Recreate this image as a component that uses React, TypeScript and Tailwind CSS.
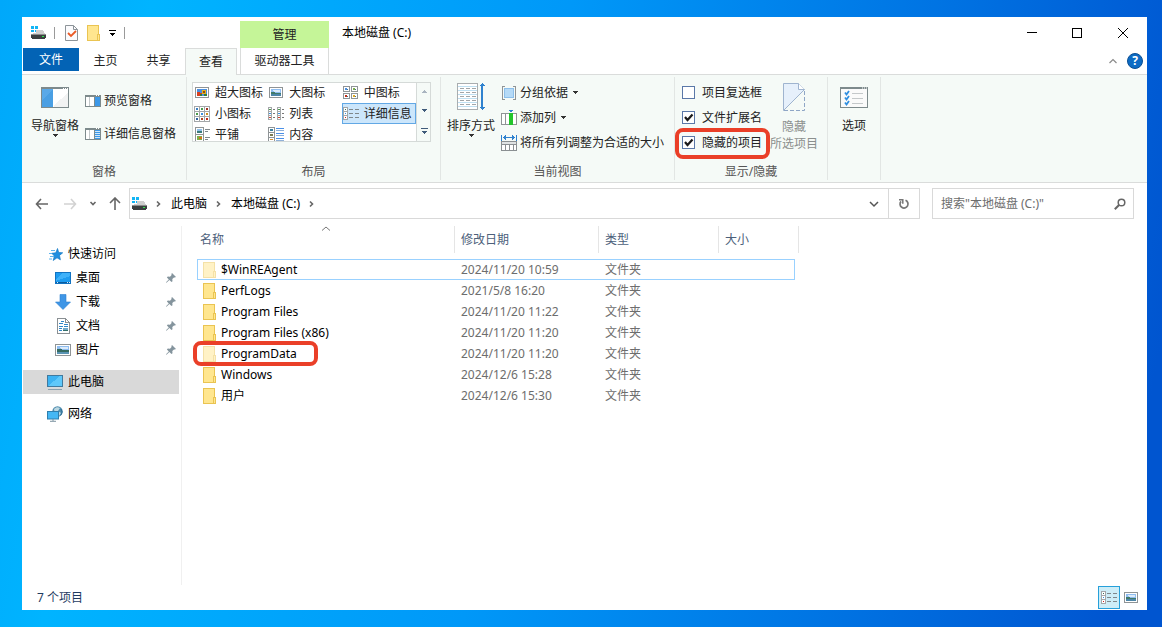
import React, { useState } from 'react';

type Kids = { children?: React.ReactNode };
type SvgProps = { w: number; h: number; children: React.ReactNode; smooth?: boolean; className?: string };

const Svg = ({ w, h, children, smooth, className = '' }: SvgProps) => (
  <svg
    width={w}
    height={h}
    viewBox={`0 0 ${w} ${h}`}
    fill="none"
    aria-hidden="true"
    shapeRendering={smooth ? 'auto' : 'crispEdges'}
    className={`shrink-0 ${className}`}
  >
    {children}
  </svg>
);

// ---------- Icons ----------

const DriveIcon = () => (
  <Svg w={16} h={16}>
    <path d="M1 1h3v3h-3zM5 1h3v3h-3zM1 5h3v2h-3zM5 5h3v2h-3z" fill="#12b5f5" />
    <path d="M6 5h7l3 5H2l1-2h3z" fill="#cfcfcf" />
    <rect x="1" y="9" width="15" height="4" fill="#3b3f40" />
    <rect x="2" y="13" width="13" height="1" fill="#3b3f40" />
    <rect x="1" y="9" width="15" height="1" fill="#8c8c8c" />
    <rect x="12" y="11" width="2" height="1" fill="#2eea4a" />
  </Svg>
);

const FolderIcon = ({ faded = false }: { faded?: boolean }) => (
  <Svg w={14} h={16} className={faded ? 'opacity-50' : ''}>
    <rect x="0.5" y="0.5" width="11" height="15" fill="#ffe68f" stroke="#eac452" />
    <path d="M10.500 9.500h2v6h-2z" fill="#ffe790" stroke="#eac452" />
  </Svg>
);

const PropertiesIcon = () => (
  <Svg w={13} h={16} smooth>
    <path d="M.5.5h8l4 4v11H.5z" fill="#fbfbfd" stroke="#8d9499" />
    <path d="M8.5.5v4h4" stroke="#8d9499" />
    <path d="M3 8l3 3 5-5" stroke="#ea5a26" strokeWidth="1.8" />
  </Svg>
);

const Arrow = ({ color = '#333' }: { color?: string }) => (
  <Svg w={5} h={3}>
    <path d="M0 0h5v1H0zM1 1h3v1H1zM2 2h1v1H2z" fill={color} />
  </Svg>
);

const UpArrow = ({ color }: { color: string }) => (
  <Svg w={5} h={3}>
    <path d="M2 0h1v1H2zM1 1h3v1H1zM0 2h5v1H0z" fill={color} />
  </Svg>
);

const NavPaneIcon = () => (
  <Svg w={28} h={21}>
    <rect x="0.5" y="0.5" width="27" height="20" fill="#fff" stroke="#7d8a8c" />
    <path d="M13 20V18L27 6v14z" fill="#f2f3f3" />
    <rect x="0" y="0" width="28" height="2" fill="#7d8a8c" />
    <path d="M22 1h1M24 1h1M26 1h1" stroke="#fff" />
    <rect x="1" y="2" width="11" height="18" fill="#4a9fe3" />
    <path d="M1 13V2h11z" fill="#5aa9e8" />
  </Svg>
);

const PreviewPaneIcon = ({ lines = false }: { lines?: boolean }) => (
  <Svg w={16} h={12}>
    <rect x="0.5" y="0.5" width="15" height="11" fill="#fff" stroke="#7d8a8c" />
    <rect width="16" height="2" fill="#7d8a8c" />
    <path d="M4.500 2v9" stroke="#c3c8ca" />
    <path d="M9.500 1v10" stroke="#7d8a8c" />
    <rect x="10" y="2" width="5" height="9" fill="#3d98e8" />
    {lines && <path d="M10 3.500h5M10 5.500h5M10 7.500h5M10 9.500h5" stroke="#cfe6fa" />}
    <path d="M11 .5h1M13 .5h1" stroke="#fff" />
  </Svg>
);

const PictureIcon = ({ vivid = false }: { vivid?: boolean }) => (
  <Svg w={14} h={11}>
    <rect x="0.5" y="0.5" width="13" height="10" fill="#fff" stroke="#8f9496" />
    {vivid ? (
      <>
        <rect x="2" y="2" width="10" height="7" fill="#4b8fe0" />
        <path d="M2 5h3v1h2v3H2z" fill="#d8401f" />
        <path d="M7 3h4v4H7z" fill="#e8b21f" />
        <path d="M8 4h2v2H8z" fill="#8a4a18" />
        <path d="M5 7h2v2H5zM9 7h3v2H9z" fill="#3a7a34" />
      </>
    ) : (
      <>
        <rect x="2" y="2" width="10" height="7" fill="#8fbdf0" />
        <path d="M4 3h7v2H5z" fill="#dcebf9" />
        <path d="M2 5h3l2 1h5v1H2z" fill="#417a68" />
        <path d="M2 7h10v2H2z" fill="#4d86a8" />
      </>
    )}
  </Svg>
);

// Wider variant used by the navigation pane
const PicturesFolderIcon = () => (
  <Svg w={16} h={12}>
    <rect x="0.5" y="0.5" width="15" height="11" fill="#fff" stroke="#8f9496" />
    <rect x="2" y="2" width="12" height="8" fill="#8fbdf0" />
    <path d="M4 3h9v2H6z" fill="#dcebf9" />
    <path d="M2 5h3l3 1h6v2H2z" fill="#356b62" />
    <path d="M2 8h12v2H2z" fill="#5a94b4" />
  </Svg>
);

const cells = ['#3a7fc0', '#4a9a4a', '#a03020', '#4a9a4a', '#3a8fe0', '#d09020', '#2f5f9f', '#b04020', '#c02818'];

const SmallIconsIcon = () => (
  <Svg w={16} h={16}>
    {cells.map((color, i) => {
      const x = (i % 3) * 5;
      const y = Math.floor(i / 3) * 5;
      return (
        <g key={i}>
          <rect x={x + 0.5} y={y + 0.5} width="5" height="5" fill="#fff" stroke="#a3a7a9" />
          <rect x={x + 2} y={y + 2} width="2" height="2" fill={color} />
        </g>
      );
    })}
  </Svg>
);

const MediumIconsIcon = () => (
  <Svg w={15} h={13}>
    {['#4b8fe0', '#7cae4a', '#c03018', '#e0a820'].map((color, i) => {
      const x = (i % 2) * 8;
      const y = Math.floor(i / 2) * 7;
      return (
        <g key={i}>
          <rect x={x + 0.5} y={y + 0.5} width="6" height="5" fill="#fff" stroke="#8f9496" />
          <rect x={x + 2} y={y + 2} width="2" height="2" fill={color} />
          <rect x={x + 4} y={y + 3} width="1" height="1" fill="#3f6f8f" />
        </g>
      );
    })}
  </Svg>
);

const ListIcon = () => (
  <Svg w={16} h={13}>
    {[0, 9].map((x) => (
      <g key={x}>
        <path d={`M${x} .5h4M${x} 4.500h4M${x} 8.500h4M${x} 12.500h4M${x + 0.5} 0v13M${x + 3.5} 0v13`} stroke="#a3a7a9" />
        <path d={`M${x + 5} 2.500h2M${x + 5} 6.500h2M${x + 5} 10.500h2`} stroke="#777" />
        <path d={`M${x + 1} 2.500h2`} stroke="#4a9a4a" />
        <path d={`M${x + 1} 6.500h2`} stroke="#3a8fe0" />
        <path d={`M${x + 1} 10.500h2`} stroke="#d04030" />
      </g>
    ))}
  </Svg>
);

const DetailsIcon = () => (
  <Svg w={16} h={13}>
    <rect x="0.5" y="0.5" width="4" height="12" fill="#fff" stroke="#a3a7a9" />
    <path d="M0 4.500h5M0 8.500h5" stroke="#a3a7a9" />
    <path d="M2 2.500h1" stroke="#3a6f5a" />
    <path d="M2 6.500h1" stroke="#3a8fe0" />
    <path d="M2 10.500h1" stroke="#d02020" />
    <path d="M6 2.500h4M12 2.500h4M6 6.500h4M12 6.500h4M6 10.500h4M12 10.500h4" stroke="#7f878b" />
  </Svg>
);

const TilesIcon = () => (
  <Svg w={15} h={15}>
    <rect x="0.500" y="0.500" width="8" height="14" fill="#fff" stroke="#8f9496" />
    <path d="M0 7.500h9" stroke="#8f9496" />
    <rect x="2" y="2" width="5" height="4" fill="#8fc0ea" />
    <rect x="2" y="4" width="5" height="2" fill="#3a7a7a" />
    <rect x="2" y="9" width="5" height="4" fill="#7cae4a" />
    <rect x="4" y="10" width="3" height="2" fill="#d8701f" />
    <path d="M10 2.500h5M10 4.500h3M10 10.500h5M10 12.500h3" stroke="#7f878b" />
  </Svg>
);

const ContentIcon = () => (
  <Svg w={16} h={15}>
    <rect x="0.500" y="0.500" width="6" height="14" fill="#fff" stroke="#8f9496" />
    <path d="M0 5.500h7M0 10.500h7" stroke="#8f9496" />
    <path d="M2 3h3" stroke="#3a7f9f" strokeWidth="2" />
    <path d="M2 8h3" stroke="#7a7a50" strokeWidth="2" />
    <path d="M2 12.500h3" stroke="#d8902f" />
    <path d="M8 1.500h8M8 6.500h8M8 11.500h8" stroke="#4a90e8" />
    <path d="M8 3.500h8M8 8.500h8M8 13.500h8" stroke="#8fb0d8" />
  </Svg>
);

const SortIcon = () => (
  <Svg w={28} h={28}>
    <rect x="0.500" y="0.500" width="20" height="26" fill="#fff" stroke="#a9adaf" />
    <path d="M1 3.500h19M1 7.500h19M1 11.500h19M1 15.500h19M1 19.500h19M1 23.500h19" stroke="#bfe0f2" />
    <path
      d="M3 5.500h4M9 5.500h4M15 5.500h4M3 9.500h4M9 9.500h4M15 9.500h4M3 13.500h4M9 13.500h4M15 13.500h4M3 17.500h4M9 17.500h4M15 17.500h4M3 21.500h4M9 21.500h4M15 21.500h4"
      stroke="#a2a6a8"
    />
    <path d="M25 3v21" stroke="#2f82cf" strokeWidth="2" />
    <path d="M22 3l3-3 3 3zM22 24l3 3 3-3z" fill="#2f82cf" />
  </Svg>
);

const GroupByIcon = () => (
  <Svg w={16} h={14}>
    <path d="M4 .5H1.500v13H4M12 .5h2.500v13H12" stroke="#8f9496" />
    <rect x="3.500" y="2.500" width="9" height="9" fill="#b5daf7" stroke="#8dbfea" />
  </Svg>
);

const AddColumnIcon = () => (
  <Svg w={16} h={15}>
    <rect x="0.500" y="3.500" width="15" height="11" fill="#fff" stroke="#8f9496" />
    <path d="M4.500 3v12" stroke="#8f9496" />
    <rect x="8" y="3" width="4" height="12" fill="#22c52c" />
    <path d="M8 0h4v1H8zM9 1h2v1H9z" fill="#2f82cf" />
  </Svg>
);

const FitColumnsIcon = () => (
  <Svg w={16} h={16}>
    <path d="M.5 0v6M15.500 0v6" stroke="#2f82cf" />
    <path d="M2 2.500h12" stroke="#2f82cf" />
    <path d="M2 2h1V1h1V0h1v5H4V4H3V3H2zM14 2h-1V1h-1V0h-1v5h1V4h1V3h1z" fill="#2f82cf" />
    <rect x="0.500" y="6.500" width="15" height="9" fill="#fff" stroke="#8a8f92" />
    <rect x="1" y="7" width="14" height="2" fill="#dfe2e3" />
    <path d="M0 9.500h16M4.500 10v5M8.500 10v5M12.500 10v5" stroke="#8a8f92" />
  </Svg>
);

const HideIcon = () => (
  <Svg w={22} h={28} smooth>
    <path d="M.5.5h15l6 6L.5 27.500z" fill="#e6f0fb" stroke="#9fb4cf" />
    <path d="M15.500.5v6h6" fill="#fff" stroke="#9fb4cf" />
    <path d="M21.500 8v19.500H1" stroke="#8fa6c6" strokeDasharray="4 2" />
  </Svg>
);

const OptionsIcon = () => (
  <Svg w={28} h={21} smooth>
    <rect x="0.500" y="0.500" width="27" height="20" fill="#fafafa" stroke="#7d8a8c" />
    <rect width="28" height="2" fill="#7d8a8c" />
    <path d="M22 1h1M24 1h1M26 1h1" stroke="#fff" />
    <path d="M5 5.500l1.500 2L9 4M5 10.500l1.500 2L9 9M5 15.500l1.500 2L9 14" stroke="#2f8ee0" strokeWidth="1.800" />
    <path d="M12 6.500h11M12 11.500h11M12 16.500h11" stroke="#c4c8ca" />
  </Svg>
);

const StarIcon = () => (
  <Svg w={14} h={13} smooth>
    <path d="M8.500.5l1.200 4 4 .3-3.200 2.600.9 4.400-3.400-2-3.800 2.700 1.200-4.500-2.600-2.700 4-.5z" fill="#1f8fe0" stroke="#1479c4" strokeWidth="0.700" />
    <path d="M2 2.500h4M0 5.500h3M1 8.500h4M0 11h3" stroke="#5cb4ee" />
  </Svg>
);

const DesktopIcon = () => (
  <Svg w={16} h={12}>
    <rect x="0.500" y="0.500" width="15" height="11" fill="#1e9cf0" stroke="#1173c2" />
    <path d="M1 9V7l7-6h7v3z" fill="#3fb2fa" />
    <path d="M1 10.500h14" stroke="#0d5c9e" />
    <path d="M2 10.500h1M12 10.500h1M14 10.500h1" stroke="#d8efff" />
  </Svg>
);

const DownloadIcon = () => (
  <Svg w={16} h={16} smooth>
    <path d="M5 .5h6V8h4.500L8 15.500.5 8H5z" fill="#3f96e6" stroke="#2c7fd0" strokeWidth="0.600" />
  </Svg>
);

const DocumentIcon = () => (
  <Svg w={13} h={16}>
    <path d="M.5.5h8l4 4v11H.5z" fill="#fff" stroke="#8a9094" />
    <path d="M8.500 1v3.500h4" stroke="#8a9094" />
    <path d="M4 3.500h3M2 5.500h4M7 6.500h4M2 8.500h4M7 8.500h4M2 10.500h3M2 12.500h3" stroke="#2f86c8" />
    <path d="M6 10h5v3H6z" fill="#6fa8c8" />
    <path d="M6 12h5v1H6z" fill="#35706a" />
  </Svg>
);

const MonitorIcon = () => (
  <Svg w={16} h={15}>
    <rect x="0.500" y="0.500" width="15" height="11" fill="#3db3f2" stroke="#417a9e" />
    <path d="M1 11L13 1h2v10z" fill="#5fc8fa" />
    <path d="M1 14.500h14" stroke="#8aa0ae" />
    <path d="M4 12.500h8" stroke="#d5dde2" />
  </Svg>
);

const NetworkIcon = () => (
  <Svg w={16} h={16} smooth>
    <circle cx="10.500" cy="5.500" r="5.200" fill="#4f8cae" />
    <path d="M7 3c2-2 4-2 6-1l-2 3 3 2-2 3c-3-1-5-4-5-7z" fill="#bcd8e2" />
    <path d="M14 3a5 5 0 010 6" stroke="#2f6f96" />
    <rect x="0.500" y="5.500" width="11" height="7.500" fill="#45b7f4" stroke="#2f7fae" />
    <path d="M3 15.300h6M6 13v2" stroke="#7d94a2" />
  </Svg>
);

const PinIcon = () => (
  <Svg w={10} h={10} smooth>
    <path d="M6 0l4 4-1.200.6-.8-.2L6.300 6l.2 2.200-1 .8L3.400 7 .5 9.800 0 9.300l2.800-2.900L.9 4.500l.9-1L4 3.700 5.600 2 5.400 1z" fill="#84949d" />
  </Svg>
);

const Chevron = ({ down = false }: { down?: boolean }) => (
  <Svg w={8} h={8} smooth className={down ? 'rotate-90' : ''}>
    <path d="M2 1.500L4.500 4 2 6.500" stroke="#666" strokeWidth="1.600" />
  </Svg>
);

// ---------- Ribbon ----------

const Group = ({ label, className, children }: Kids & { label: string; className: string }) => (
  <section className={`flex shrink-0 flex-col border-r border-[#e2e6e4] ${className}`}>
    <div className="flex flex-1">{children}</div>
    <div className="h-4 text-center text-[#555]">{label}</div>
  </section>
);

const BigButton = ({ icon, label, arrow }: { icon: React.ReactNode; label: string; arrow?: boolean }) => (
  <button className="flex flex-col items-center self-start whitespace-nowrap">
    <span className="flex h-8 items-center">{icon}</span>
    <span className="mt-[5px]">{label}</span>
    {arrow && <Arrow />}
  </button>
);

const views = [
  { label: '超大图标', icon: <PictureIcon vivid /> },
  { label: '大图标', icon: <PictureIcon /> },
  { label: '中图标', icon: <MediumIconsIcon /> },
  { label: '小图标', icon: <SmallIconsIcon /> },
  { label: '列表', icon: <ListIcon /> },
  { label: '详细信息', icon: <DetailsIcon /> },
  { label: '平铺', icon: <TilesIcon /> },
  { label: '内容', icon: <ContentIcon /> },
];

type CheckProps = { label: string; on: boolean; onChange: () => void; marked?: boolean };

const Check = ({ label, on, onChange, marked }: CheckProps) => (
  <label className="relative flex h-[25px] items-center gap-[7px] whitespace-nowrap">
    <span className="relative h-[13px] w-[13px]">
      <input
        type="checkbox"
        checked={on}
        onChange={onChange}
        className="block h-[13px] w-[13px] appearance-none border border-[#5a78a8] bg-white"
      />
      {on && (
        <svg className="pointer-events-none absolute inset-0" width="13" height="13" viewBox="0 0 13 13" fill="none">
          <path d="M3 6l2.500 3L10.500 3.500" stroke="#1c1c1c" strokeWidth="2.200" />
        </svg>
      )}
    </span>
    {label}
    {marked && <span className="pointer-events-none absolute -bottom-1 -left-[7px] -right-2 -top-[2px] rounded-lg border-4 border-[#ea3f28]" />}
  </label>
);

const Ribbon = () => {
  const [view, setView] = useState('详细信息');
  const [checks, setChecks] = useState([false, true, true]);
  const toggle = (i: number) => setChecks(checks.map((c, n) => (n === i ? !c : c)));

  return (
    <div className="flex h-[109px] border-y border-[#dadcdb] bg-[#f5faf7] py-[2px]">
      <Group label="窗格" className="w-[165px]">
        <div className="ml-[9px] pt-1">
          <BigButton icon={<NavPaneIcon />} label="导航窗格" arrow />
        </div>
        <div className="ml-[6px] flex flex-col gap-[17px] whitespace-nowrap pt-4">
          <button className="flex items-center gap-[3px]"><PreviewPaneIcon />预览窗格</button>
          <button className="flex items-center gap-[3px]"><PreviewPaneIcon lines />详细信息窗格</button>
        </div>
      </Group>

      <Group label="布局" className="w-[254px]">
        <div className="ml-[5px] mt-[5px] flex h-[60px] overflow-hidden bg-white outline outline-1 -outline-offset-1 outline-[#d5dad8]">
          <div className="grid w-56 auto-rows-[21px] grid-cols-3 pl-px">
            {views.map((v) => (
              <button
                key={v.label}
                onClick={() => setView(v.label)}
                className={`flex items-center gap-[5px] whitespace-nowrap border ${
                  view === v.label ? 'border-[#62a8e5] bg-[#cce6fb]' : 'border-transparent'
                }`}
              >
                <span className="flex w-4 justify-center">{v.icon}</span>
                {v.label}
              </button>
            ))}
          </div>
          <div className="flex w-[15px] flex-col items-center justify-around border-l border-[#d5dad8] bg-[#f5faf7]">
            <button aria-label="上移"><UpArrow color="#a9b4c0" /></button>
            <button aria-label="下移"><Arrow color="#3f5a7a" /></button>
            <button aria-label="更多" className="flex flex-col items-center gap-[2px]">
              <span className="h-px w-[7px] bg-[#3f5a7a]" />
              <Arrow color="#3f5a7a" />
            </button>
          </div>
        </div>
      </Group>

      <Group label="当前视图" className="w-[234px]">
        <div className="ml-[6px] pt-1">
          <BigButton icon={<SortIcon />} label="排序方式" arrow />
        </div>
        <div className="ml-[6px] flex flex-col whitespace-nowrap pt-[3px]">
          <button className="flex h-[25px] items-center gap-[3px]">
            <GroupByIcon />分组依据<span className="ml-[2px]"><Arrow /></span>
          </button>
          <button className="flex h-[25px] items-center gap-[3px]">
            <AddColumnIcon />添加列<span className="ml-[2px]"><Arrow /></span>
          </button>
          <button className="flex h-[25px] items-center gap-[3px]"><FitColumnsIcon />将所有列调整为合适的大小</button>
        </div>
      </Group>

      <Group label="显示/隐藏" className="w-[153px]">
        <div className="ml-[7px] flex flex-col pt-[3px]">
          <Check label="项目复选框" on={checks[0]} onChange={() => toggle(0)} />
          <Check label="文件扩展名" on={checks[1]} onChange={() => toggle(1)} />
          <Check label="隐藏的项目" on={checks[2]} onChange={() => toggle(2)} marked />
        </div>
        <button className="ml-2 flex flex-col items-center self-start whitespace-nowrap pt-1 text-[#8b8f8d]" disabled>
          <span className="flex h-8 items-center"><HideIcon /></span>
          <span className="mt-[5px] leading-[17px]">隐藏<br />所选项目</span>
        </button>
      </Group>

      <Group label="" className="w-[53px]">
        <div className="flex flex-1 justify-center pt-1">
          <BigButton icon={<OptionsIcon />} label="选项" />
        </div>
      </Group>
    </div>
  );
};

// ---------- Header ----------

const Header = () => (
  <header className="flex h-[57px]">
    <div className="flex w-[218px] shrink-0 flex-col">
      <div className="flex h-[31px] items-center gap-2 pl-2">
        <DriveIcon />
        <span className="h-3 w-px bg-[#9a9a9a]" />
        <button aria-label="属性" className="ml-[2px]"><PropertiesIcon /></button>
        <button aria-label="新建文件夹" className="ml-px"><FolderIcon /></button>
        <button aria-label="自定义快速访问工具栏" className="flex flex-col items-center gap-[2px]">
          <span className="h-px w-[7px] bg-black" />
          <Arrow color="#000" />
        </button>
        <span className="h-3 w-px bg-[#9a9a9a]" />
      </div>
      <nav className="flex flex-1 pl-px">
        <button className="mb-[3px] w-14 bg-[#0363b5] text-white">文件</button>
        <button className="w-[53px]">主页</button>
        <button className="w-[53px]">共享</button>
        <button className="relative -mb-px w-[52px] border border-b-0 border-[#dadcdb] bg-[#f5faf7]">查看</button>
      </nav>
    </div>
    <div className="flex w-[89px] shrink-0 flex-col pt-1">
      <div className="flex h-[27px] items-center justify-center bg-[#c5f598]">管理</div>
      <button className="flex-1 whitespace-nowrap border-x border-[#dadcdb]">驱动器工具</button>
    </div>
    <h1 className="flex h-8 flex-1 items-center pl-[13px] text-black">本地磁盘 (C:)</h1>
    <div className="flex flex-col items-end">
      <div className="flex h-[31px]">
        <button aria-label="最小化" className="flex w-[45px] items-center justify-center">
          <Svg w={10} h={10}><path d="M0 4.500h10" stroke="#000" /></Svg>
        </button>
        <button aria-label="最大化" className="flex w-[45px] items-center justify-center">
          <Svg w={10} h={10}><path d="M.5.5h9v9h-9z" stroke="#000" /></Svg>
        </button>
        <button aria-label="关闭" className="flex w-12 items-center justify-center">
          <Svg w={10} h={10} smooth><path d="M0 0l10 10M10 0L0 10" stroke="#000" /></Svg>
        </button>
      </div>
      <div className="flex flex-1 items-center gap-[10px] pr-1">
        <button aria-label="折叠功能区">
          <Svg w={8} h={6} smooth><path d="M.5 5L4 1.500 7.500 5" stroke="#8a8a8a" strokeWidth="1.200" /></Svg>
        </button>
        <button aria-label="帮助" className="flex h-4 w-4 items-center justify-center rounded-full border border-[#0a4f94] bg-[#0d6bc4] font-bold text-white">?</button>
      </div>
    </div>
  </header>
);

const AddressBar = () => (
  <div className="flex h-[43px] items-start pl-[13px] pr-[13px] pt-[5px]">
    <div className="flex h-[31px] w-[94px] shrink-0 items-center gap-4 text-[#666]">
      <button aria-label="后退">
        <Svg w={13} h={12} smooth><path d="M6 1L1.500 6 6 11M1.500 6H13" stroke="#666" strokeWidth="1.600" /></Svg>
      </button>
      <button aria-label="前进">
        <Svg w={13} h={12} smooth><path d="M7 1l4.500 5L7 11M11.500 6H0" stroke="#d2d2d2" strokeWidth="1.600" /></Svg>
      </button>
      <button aria-label="最近浏览的位置" className="-ml-1"><Chevron down /></button>
      <button aria-label="上移到上一级" className="-ml-1">
        <Svg w={12} h={13} smooth><path d="M1 6l5-5 5 5M6 1.500V13" stroke="#666" strokeWidth="1.600" /></Svg>
      </button>
    </div>
    <div className="flex h-[31px] flex-1 border border-[#d9d9d9] text-black">
      <nav className="flex flex-1 items-center gap-2 whitespace-nowrap pl-px">
        <DriveIcon />
        <Chevron />
        <a href="#computer">此电脑</a>
        <Chevron />
        <a href="#c">本地磁盘 (C:)</a>
        <Chevron />
      </nav>
      <button aria-label="历史记录" className="flex w-7 items-center justify-center">
        <Svg w={10} h={8} smooth><path d="M1 2l4 4 4-4" stroke="#555" strokeWidth="1.500" /></Svg>
      </button>
      <button aria-label="刷新" className="flex w-[31px] items-center justify-center border-l border-[#d9d9d9]">
        <Svg w={12} h={12} smooth>
          <path d="M7.500 2.300A4 4 0 113 3.400" stroke="#777" strokeWidth="1.700" />
          <path d="M1 1.800h3.800v4" stroke="#777" strokeWidth="1.500" />
        </Svg>
      </button>
    </div>
    <label className="ml-3 flex h-[31px] w-[202px] items-center border border-[#d9d9d9] pl-2 pr-[7px]">
      <input type="search" aria-label="搜索" placeholder={'搜索"本地磁盘 (C:)"'} className="min-w-0 flex-1 outline-none placeholder:text-[#6d6d6d]" />
      <Svg w={12} h={12} smooth>
        <circle cx="7.500" cy="4.500" r="3.300" stroke="#666" strokeWidth="1.500" />
        <path d="M5 7L.8 11.200" stroke="#666" strokeWidth="2" />
      </Svg>
    </label>
  </div>
);

// ---------- Sidebar ----------

const quick = [
  { label: '桌面', icon: <DesktopIcon /> },
  { label: '下载', icon: <DownloadIcon /> },
  { label: '文档', icon: <DocumentIcon /> },
  { label: '图片', icon: <PicturesFolderIcon /> },
];

const Sidebar = () => (
  <nav className="w-40 shrink-0 border-r border-[#f0f0f0] pl-px pr-[2px] pt-4 text-black">
    <a href="#quick" className="flex h-6 items-center gap-[5px] pl-6">
      <span className="flex w-4 justify-end"><StarIcon /></span>
      快速访问
    </a>
    {quick.map((q) => (
      <a key={q.label} href="#quick" className="flex h-6 items-center gap-[5px] pl-8 pr-[3px]">
        <span className="flex w-4 justify-center">{q.icon}</span>
        <span className="flex-1">{q.label}</span>
        <PinIcon />
      </a>
    ))}
    <a href="#computer" className="mt-2 flex h-6 items-center gap-[5px] bg-[#d9d9d9] pl-6"><MonitorIcon />此电脑</a>
    <a href="#network" className="mt-2 flex h-6 items-center gap-[5px] pl-6"><NetworkIcon />网络</a>
  </nav>
);

// ---------- File list ----------

const files = [
  { name: '$WinREAgent', date: '2024/11/20 10:59', hidden: true, focused: true },
  { name: 'PerfLogs', date: '2021/5/8 16:20' },
  { name: 'Program Files', date: '2024/11/20 11:22' },
  { name: 'Program Files (x86)', date: '2024/11/20 11:20' },
  { name: 'ProgramData', date: '2024/11/20 11:20', hidden: true, marked: true },
  { name: 'Windows', date: '2024/12/6 15:28' },
  { name: '用户', date: '2024/12/6 15:30' },
];

const columns = ['名称', '修改日期', '类型', '大小'];

const FileList = () => (
  <main className="flex-1 pl-[15px]">
    <table className="w-[602px] table-fixed border-separate border-spacing-0 whitespace-nowrap text-left">
      <colgroup>
        <col className="w-[258px]" />
        <col className="w-36" />
        <col className="w-[120px]" />
        <col className="w-[76px]" />
        <col className="w-1" />
      </colgroup>
      <thead>
        <tr className="text-[#4c607a]">
          {columns.map((c, i) => (
            <th key={c} colSpan={i === 3 ? 2 : 1} className="relative p-0 pb-[6px] font-normal">
              <div className={`flex h-[27px] items-center border-r border-[#e5e5e5] ${i ? 'pl-[6px]' : 'pl-[3px]'}`}>{c}</div>
              {i === 0 && (
                <span className="absolute left-1/2 top-0 -translate-x-1/2">
                  <Svg w={10} h={5} smooth><path d="M1 4.500L5 1l4 3.500" stroke="#777" /></Svg>
                </span>
              )}
            </th>
          ))}
        </tr>
      </thead>
      <tbody className="text-[#6d6d6d]">
        {files.map((f) => {
          const line = f.focused ? 'border-[#99d1ff]' : 'border-transparent';
          return (
            <tr key={f.name} className="h-[21px]">
              <td className={`relative border-y border-l p-0 pl-[5px] text-black ${line}`}>
                <span className="flex h-[19px] items-center gap-1">
                  <FolderIcon faded={f.hidden} />
                  {f.name}
                </span>
                {f.marked && (
                  <span className="pointer-events-none absolute -inset-y-[3px] -left-[5px] w-[125px] rounded-lg border-4 border-[#ea3f28]" />
                )}
              </td>
              <td className={`border-y p-0 pl-[6px] ${line}`}>{f.date}</td>
              <td className={`border-y p-0 pl-[6px] ${line}`}>文件夹</td>
              <td className={`border-y border-r p-0 ${line}`} />
              <td className="p-0" />
            </tr>
          );
        })}
      </tbody>
    </table>
  </main>
);

const StatusBar = () => (
  <footer className="flex h-[25px] items-center gap-1 pl-[15px] pr-[9px] text-[#1f3b5f]">
    <span className="flex-1">7 个项目</span>
    <button aria-label="详细信息视图" className="flex h-[23px] w-[22px] items-center justify-center border border-[#26a0da] bg-[#cdedf7]">
      <DetailsIcon />
    </button>
    <button aria-label="大图标视图"><PictureIcon /></button>
  </footer>
);

export default function App() {
  return (
    <div className="flex min-h-screen flex-col bg-[linear-gradient(100deg,#00a8fa,#00b4ff_12%,#0098f8_45%,#0072e2_75%,#0055d0_96%)] pb-[17px] pl-[22px] pr-[15px] pt-[17px] font-['Noto_Sans','Noto_Sans_CJK_SC',sans-serif] text-xs text-[#222]">
      <div className="flex flex-1 flex-col bg-white">
        <Header />
        <Ribbon />
        <AddressBar />
        <div className="flex flex-1">
          <Sidebar />
          <FileList />
        </div>
        <StatusBar />
      </div>
    </div>
  );
}
